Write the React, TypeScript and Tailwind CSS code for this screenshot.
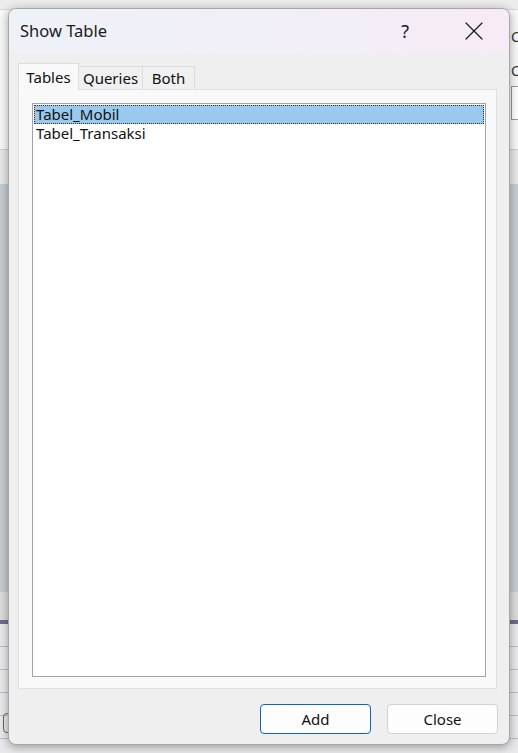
import { X } from "lucide-react";

const tables = ["Tabel_Mobil", "Tabel_Transaksi"];
const tabs = ["Tables", "Queries", "Both"];

function Backdrop() {
  return (
    <div className="relative flex h-full w-full flex-col">
      <div className="h-[10px] border-b border-[#d8d8d8] bg-[#ececec]" />
      <div className="h-[140px] border-b border-[#cfcfcf] bg-[#f8f8f8]" />
      <div className="h-[34px] bg-[#e8e8e8]" />
      <div className="h-[408px] bg-[#c6ccd1]" />
      <div className="h-[28px] bg-[#dcdcdc]" />
      <div className="h-[4px] bg-[#6f6b8c]" />
      <div className="flex-1 bg-[#e9e9ec]">
        {[0, 1, 2, 3, 4].map((i) => (
          <div key={i} className="h-[23px] border-b border-[#b9bdd0]" />
        ))}
      </div>
      <span className="absolute left-[511px] top-[26px] text-[14px] text-[#333]">Co</span>
      <span className="absolute left-[511px] top-[60px] text-[14px] text-[#333]">Co</span>
      <div className="absolute left-[511px] top-[86px] h-[34px] w-[12px] border border-[#999] bg-white" />
      <div className="absolute left-[3px] top-[713px] h-[20px] w-[10px] rounded-[4px] border border-[#666]" />
    </div>
  );
}

export default function App() {
  return (
    <div
      className="relative h-[753px] w-[518px] overflow-hidden"
      style={{ fontFamily: '"Noto Sans", "Open Sans", sans-serif' }}
    >
      <Backdrop />

      <div className="absolute left-[8px] top-[8px] flex h-[737px] w-[502px] flex-col overflow-hidden rounded-lg border border-[#a7a7a7] bg-[#efefef] shadow-[0_2px_10px_rgba(0,0,0,0.35)]">
        <div className="flex h-[44px] shrink-0 items-center bg-gradient-to-r from-[#eef1f8] via-[#f1eff8] to-[#f7ebf5] pl-[11px]">
          <span className="text-[16.5px] text-[#1b1b1b]">Show Table</span>
          <span className="ml-auto mr-[49px] text-[18px] text-[#1b1b1b]">?</span>
          <X className="mr-[19px] h-[32px] w-[32px] text-[#1b1b1b]" strokeWidth={0.9} />
        </div>

        <div className="flex flex-1 flex-col px-[9px] pt-[10px]">
          <div className="flex h-[26px] items-end text-[15px] text-[#111]">
            {tabs.map((t, i) =>
              i === 0 ? (
                <div
                  key={t}
                  className="relative z-10 -mb-px flex h-[27px] w-[61px] items-center justify-center border border-b-0 border-[#dedede] bg-[#f9f9f9]"
                >
                  {t}
                </div>
              ) : (
                <div
                  key={t}
                  className={`flex h-[23px] items-center justify-center border border-b-0 border-l-0 border-[#dcdcdc] bg-[#f0f0f0] ${
                    i === 1 ? "w-[64px]" : "w-[52px]"
                  }`}
                >
                  {t}
                </div>
              )
            )}
          </div>

          <div className="h-[600px] w-[479px] border border-[#e0e0e0] bg-[#f9f9f9] px-[13px] pb-[11px] pt-[13px]">
            <div className="h-full w-[454px] border border-[#a3a3a3] bg-white p-px text-[15px] leading-[19px] text-[#111]">
              {tables.map((t, i) => (
                <div
                  key={t}
                  className={`h-[19px] ${
                    i === 0
                      ? "border border-dotted border-[#333] bg-[#99c9ef] pl-px leading-[17px]"
                      : "pl-[2px]"
                  }`}
                >
                  {t}
                </div>
              ))}
            </div>
          </div>

          <div className="mt-[15px] flex justify-end gap-[16px] pr-[2px] text-[15px] text-[#111]">
            <button className="h-[30px] w-[111px] rounded-[4px] border border-[#0a66c2] bg-[#fdfdfd]">
              Add
            </button>
            <button className="h-[30px] w-[111px] rounded-[4px] border border-[#d2d2d2] bg-[#fdfdfd]">
              Close
            </button>
          </div>
        </div>
      </div>
    </div>
  );
}
